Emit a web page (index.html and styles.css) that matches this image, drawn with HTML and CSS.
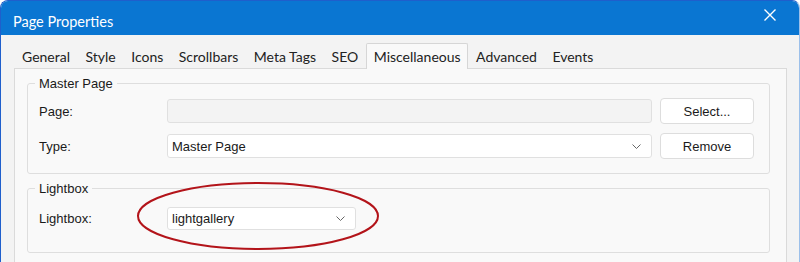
FILE: index.html
```html
<!DOCTYPE html>
<html lang="en">
<head>
  <meta charset="UTF-8">
  <title>Page Properties</title>
  <link rel="stylesheet" href="styles.css">
</head>
<body>

  <div class="window">
    <!-- Title bar -->
    <div class="titlebar">
      <span class="title">Page Properties</span>
      <span class="close">
        <svg width="12" height="12" viewBox="0 0 12 12">
          <path d="M0.5 0.5 L11.5 11.5 M11.5 0.5 L0.5 11.5" stroke="#fff" stroke-width="1.4" fill="none"/>
        </svg>
      </span>
    </div>

    <div class="content">
      <!-- Tabs -->
      <div class="tabs">
        <div class="tab">General</div>
        <div class="tab">Style</div>
        <div class="tab">Icons</div>
        <div class="tab">Scrollbars</div>
        <div class="tab">Meta Tags</div>
        <div class="tab">SEO</div>
        <div class="tab active">Miscellaneous</div>
        <div class="tab">Advanced</div>
        <div class="tab">Events</div>
      </div>

      <div class="panel">
        <fieldset class="group">
          <legend>Master Page</legend>
          <div class="row">
            <label>Page:</label>
            <div class="field disabled"></div>
            <button type="button">Select...</button>
          </div>
          <div class="row">
            <label>Type:</label>
            <div class="field select">
              <span>Master Page</span>
              <svg class="chevron" width="9" height="5" viewBox="0 0 9 5"><path d="M0.5 0.5 L4.5 4.5 L8.5 0.5" stroke="#666" stroke-width="1" fill="none"/></svg>
            </div>
            <button type="button">Remove</button>
          </div>
        </fieldset>

        <fieldset class="group lightbox">
          <legend>Lightbox</legend>
          <div class="row">
            <label>Lightbox:</label>
            <div class="field select small">
              <span>lightgallery</span>
              <svg class="chevron" width="9" height="5" viewBox="0 0 9 5"><path d="M0.5 0.5 L4.5 4.5 L8.5 0.5" stroke="#666" stroke-width="1" fill="none"/></svg>
            </div>
          </div>
          <!-- red highlight ring -->
          <svg class="ring" width="246" height="70" viewBox="0 0 246 70">
            <ellipse cx="123" cy="35" rx="120" ry="33" stroke="#b3141a" stroke-width="2" fill="none"/>
          </svg>
        </fieldset>
      </div>
    </div>
  </div>

</body>
</html>
```

FILE: styles.css
```css
body {
  margin: 0;
  background-color: #fff;
  font-family: "Liberation Sans", Arial, sans-serif;
  font-size: 13px;
  color: #1a1a1a;
}

.window {
  width: 800px;
  height: 270px;
  box-sizing: border-box;
  border: 1px solid #1f5fcc;
  border-right-color: #9cc0ea;
  border-bottom: none;
  border-radius: 8px 8px 0 0;
  background-color: #f3f3f3;
  overflow: hidden;
}

.titlebar {
  height: 34px;
  background-color: #0a76d2;
  color: white;
  display: flex;
  align-items: center;
  justify-content: space-between;
  padding: 0 0 0 12px;
  font-family: Lato, sans-serif;
  font-size: 14.5px;
}

.title {
  margin-top: 6px;
}

.close {
  width: 46px;
  display: flex;
  justify-content: center;
  margin-right: 6px;
  margin-top: -6px;
}

.content {
  padding: 8px 12px 0 13px;
}

.tabs {
  display: flex;
  font-family: Lato, sans-serif;
  font-size: 14px;
  color: #222;
  position: relative;
  z-index: 1;
}

.tab {
  height: 24px;
  line-height: 25px;
  padding: 0 6.5px 0 7px;
  border: 1px solid transparent;
  border-bottom: none;
}

.tab.active {
  background-color: #f9f9f9;
  border-color: #d6d6d6;
  border-radius: 2px 2px 0 0;
  height: 25px;
  margin-bottom: -1px;
}

.panel {
  border: 1px solid #dadada;
  background-color: #f9f9f9;
  height: 200px;
  padding: 7px 16px 0 12px;
}

.group {
  margin: 0;
  border: 1px solid #dedede;
  border-radius: 3px;
  padding: 0 7px 14px 7px;
  position: relative;
}

.group legend {
  padding: 0 4px;
}

.group.lightbox {
  margin-top: 7px;
  padding-bottom: 21px;
}

.row {
  display: flex;
  align-items: center;
  height: 26px;
  margin-top: 7px;
  padding: 0 8px 0 4px;
}

.row + .row {
  margin-top: 9px;
}

.lightbox .row {
  margin-top: 9px;
}

label {
  width: 128px;
}

.field {
  flex: 1;
  height: 22px;
  box-sizing: border-box;
  border: 1px solid #e0e0e0;
  border-radius: 3px;
  background-color: #fff;
  display: flex;
  align-items: center;
  padding: 0 10px 0 4px;
}

.field.disabled {
  height: 24px;
  background-color: #f3f3f3;
}

.field.select {
  height: 24px;
  justify-content: space-between;
}

.field.small {
  flex: none;
  width: 189px;
  height: 23px;
}

.chevron {
  margin-top: 1px;
}

button {
  width: 94px;
  height: 26px;
  margin-left: 8px;
  border: 1px solid #dddddd;
  border-radius: 4px;
  background-color: #fff;
  font-family: "Liberation Sans", Arial, sans-serif;
  font-size: 13px;
  color: #1a1a1a;
}

.ring {
  position: absolute;
  left: 107px;
  top: -15px;
}
```
